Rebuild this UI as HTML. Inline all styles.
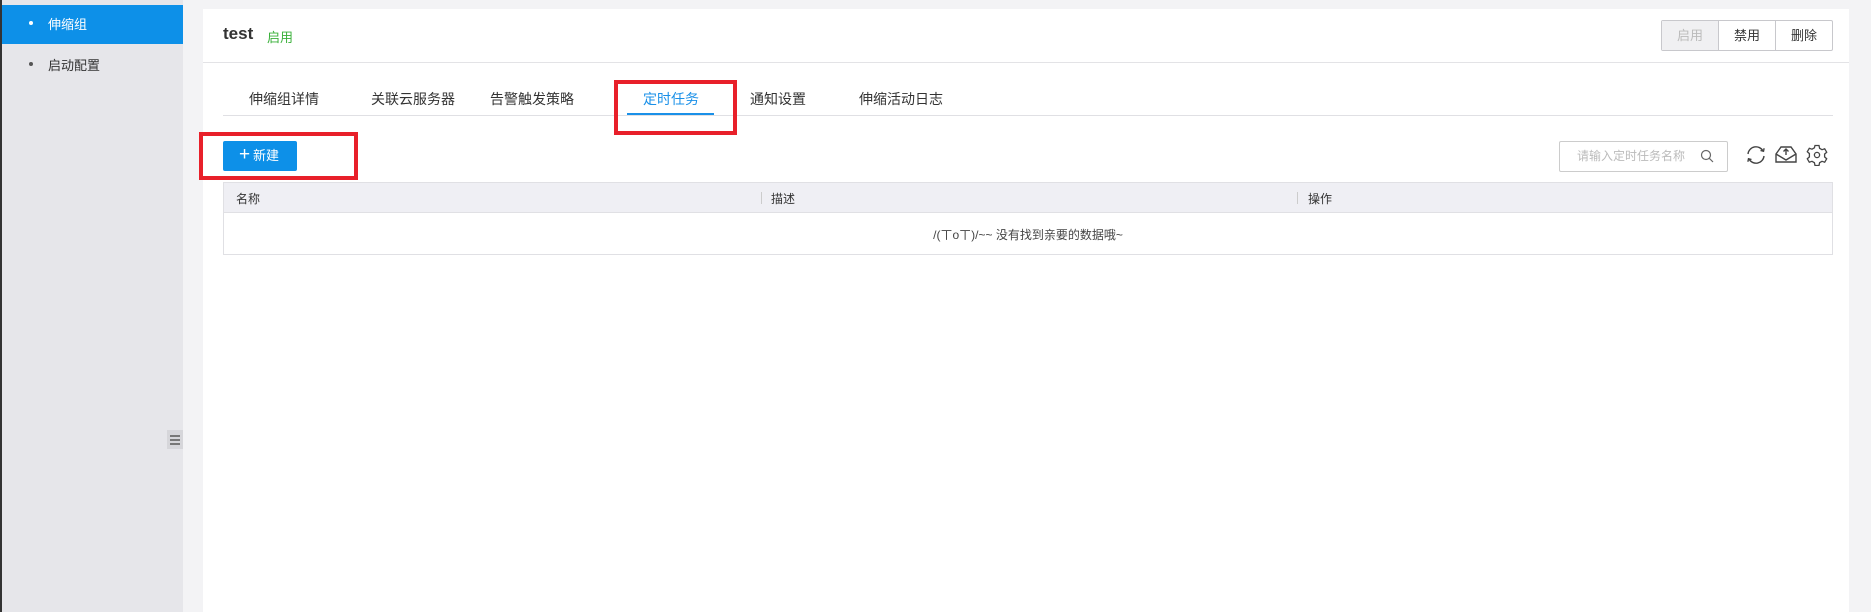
<!DOCTYPE html>
<html><head><meta charset="utf-8"><style>
*{margin:0;padding:0;box-sizing:border-box}
body{width:1871px;height:612px;background:#f3f3f5;font-family:"Liberation Sans","Noto Sans CJK SC",sans-serif;font-size:13px;color:#333;position:relative;overflow:hidden}
.a{position:absolute}
</style></head><body>
<div class="a" style="left:0;top:0;width:2px;height:612px;background:#333"></div>
<div class="a" style="left:2px;top:0;width:181px;height:612px;background:#e6e6ea"></div>
<div class="a" style="left:2px;top:5px;width:181px;height:39px;background:#0d90e8"></div>
<div class="a" style="left:29px;top:21px;width:4px;height:4px;border-radius:2px;background:#fff"></div>
<div class="a" style="left:48px;top:14px;color:#fff;font-size:13px">伸缩组</div>
<div class="a" style="left:29px;top:62px;width:4px;height:4px;border-radius:2px;background:#555"></div>
<div class="a" style="left:48px;top:55px;color:#333;font-size:13px">启动配置</div>
<div class="a" style="left:167px;top:430px;width:16px;height:19px;background:#d6d6da"></div>
<div class="a" style="left:170px;top:435px;width:10px;height:2px;background:#777;box-shadow:0 4px 0 #777,0 8px 0 #777"></div>

<div class="a" style="left:203px;top:9px;width:1646px;height:603px;background:#fff"></div>
<div class="a" style="left:223px;top:24px;font-size:17px;font-weight:bold;color:#333">test</div>
<div class="a" style="left:267px;top:27px;font-size:13px;color:#3ab03a">启用</div>
<div class="a" style="left:203px;top:62px;width:1646px;height:1px;background:#e3e3e6"></div>

<div class="a" style="left:1661px;top:20px;width:172px;height:31px;border:1px solid #c8c8cc;border-radius:2px;display:flex">
<div style="width:57px;background:#f0f0f2;color:#bbb;text-align:center;line-height:29px;border-right:1px solid #c8c8cc">启用</div>
<div style="width:57px;text-align:center;line-height:29px;border-right:1px solid #c8c8cc">禁用</div>
<div style="flex:1;text-align:center;line-height:29px">删除</div></div>

<div class="a" style="left:223px;top:115px;width:1610px;height:1px;background:#e0e0e4"></div>
<div class="a" style="left:249px;top:89px;font-size:14px">伸缩组详情</div>
<div class="a" style="left:371px;top:89px;font-size:14px">关联云服务器</div>
<div class="a" style="left:490px;top:89px;font-size:14px">告警触发策略</div>
<div class="a" style="left:643px;top:89px;font-size:14px;color:#1a90e8">定时任务</div>
<div class="a" style="left:750px;top:89px;font-size:14px">通知设置</div>
<div class="a" style="left:859px;top:89px;font-size:14px">伸缩活动日志</div>
<div class="a" style="left:627px;top:113px;width:87px;height:2px;background:#1a90e8"></div>
<div class="a" style="left:614px;top:80px;width:123px;height:55px;border:4px solid #e8202a"></div>

<div class="a" style="left:223px;top:141px;width:74px;height:30px;background:#0d90e8;border-radius:2px;color:#fff;font-size:13px;line-height:30px;padding-left:16px"><span style="font-size:19px;position:absolute;left:16px;top:-1px">+</span><span style="margin-left:14px">新建</span></div>
<div class="a" style="left:199px;top:132px;width:159px;height:48px;border:4px solid #e8202a"></div>

<div class="a" style="left:1559px;top:141px;width:169px;height:31px;border:1px solid #ccc;border-radius:2px;color:#bbb;font-size:12px;line-height:29px;padding-left:17px">请输入定时任务名称</div>
<svg class="a" style="left:1700px;top:149px" width="14" height="14" viewBox="0 0 14 14" fill="none" stroke="#666" stroke-width="1.2"><circle cx="6" cy="6" r="4.5"/><path d="M9.3 9.3L13 13"/></svg>
<svg class="a" style="left:1745px;top:144px" width="22" height="22" viewBox="0 0 22 22" fill="none" stroke="#444" stroke-width="1.4"><path d="M3 10A8 8 0 0 1 18 7"/><path d="M19 12A8 8 0 0 1 4 15"/><path d="M15.5 6.5l3 .8.6-3"/><path d="M6.5 15.5l-3-.8-.6 3"/></svg>
<svg class="a" style="left:1775px;top:144px" width="22" height="20" viewBox="0 0 22 20" fill="none" stroke="#444" stroke-width="1.4"><path d="M1 10L6 3h10l5 7v8H1z"/><path d="M1 10l10 6 10-6"/><path d="M11 11V5M8.5 7.5L11 5l2.5 2.5"/></svg>
<svg class="a" style="left:1806px;top:144px" width="22" height="22" viewBox="0 0 22 22" fill="none" stroke="#444" stroke-width="1.3"><path d="M9 1.5h4l.6 2.8 2.4 1.4 2.7-.9 2 3.4-2.1 1.9v2.8l2.1 1.9-2 3.4-2.7-.9-2.4 1.4-.6 2.8H9l-.6-2.8-2.4-1.4-2.7.9-2-3.4 2.1-1.9V9.6L1.3 7.7l2-3.4 2.7.9 2.4-1.4z"/><circle cx="11" cy="11" r="2.6"/></svg>

<div class="a" style="left:223px;top:182px;width:1610px;height:73px;border:1px solid #e0e0e4"></div>
<div class="a" style="left:224px;top:183px;width:1608px;height:30px;background:#efeff4;border-bottom:1px solid #e0e0e4"></div>
<div class="a" style="left:236px;top:190px;font-size:12px">名称</div>
<div class="a" style="left:761px;top:192px;width:1px;height:12px;background:#ccc"></div>
<div class="a" style="left:771px;top:190px;font-size:12px">描述</div>
<div class="a" style="left:1297px;top:192px;width:1px;height:12px;background:#ccc"></div>
<div class="a" style="left:1308px;top:190px;font-size:12px">操作</div>
<div class="a" style="left:223px;top:226px;width:1610px;text-align:center;font-size:12px;color:#444">/(ㄒoㄒ)/~~ 没有找到亲要的数据哦~</div>
</body></html>
